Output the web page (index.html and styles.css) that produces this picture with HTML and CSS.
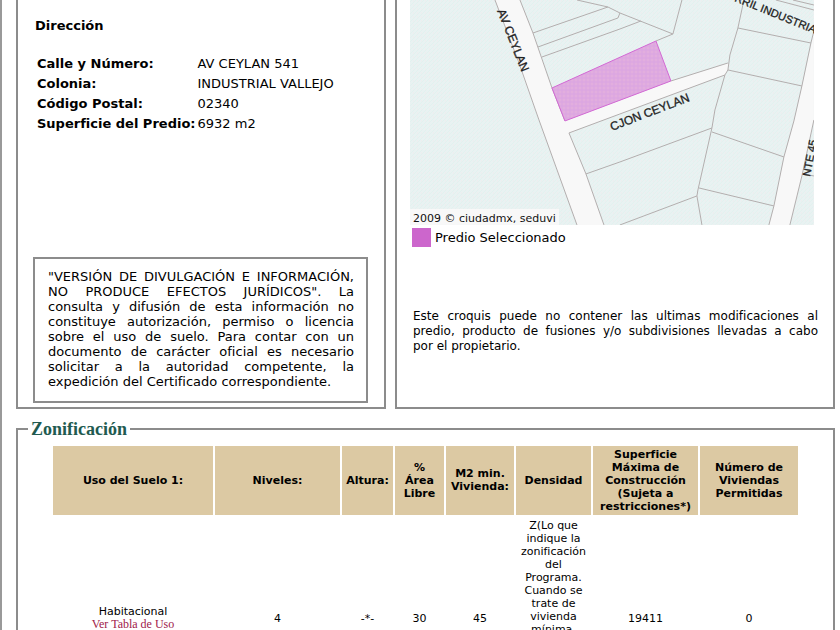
FILE: index.html
```html
<!DOCTYPE html>
<html lang="es">
<head>
<meta charset="utf-8">
<title>Zonificación</title>
<link rel="stylesheet" href="styles.css">
</head>
<body>
<main class="page">
  <div class="columns">
    <section class="panel address">
      <h2 class="heading">Dirección</h2>
      <table class="details">
        <tr><th scope="row">Calle y Número:</th><td>AV CEYLAN 541</td></tr>
        <tr><th scope="row">Colonia:</th><td>INDUSTRIAL VALLEJO</td></tr>
        <tr><th scope="row">Código Postal:</th><td>02340</td></tr>
        <tr><th scope="row">Superficie del Predio:</th><td>6932 m2</td></tr>
      </table>
      <p class="notice">"VERSIÓN DE DIVULGACIÓN E INFORMACIÓN, NO PRODUCE EFECTOS JURÍDICOS". La consulta y difusión de esta información no constituye autorización, permiso o licencia sobre el uso de suelo. Para contar con un documento de carácter oficial es necesario solicitar a la autoridad competente, la expedición del Certificado correspondiente.</p>
    </section>
    <section class="panel sketch">
      <svg class="map" viewBox="410 0 404 225">
        <defs>
          <pattern id="land" width="4" height="4" patternUnits="userSpaceOnUse">
            <rect width="4" height="4" fill="#e9f2f2"/>
            <path d="M0 4L4 0" stroke="#e2f1ef" stroke-width="1"/>
            <path d="M1 1h1" stroke="#f2eaec" stroke-width="1"/>
          </pattern>
          <pattern id="lot" width="4" height="4" patternUnits="userSpaceOnUse">
            <rect width="4" height="4" fill="#e2aede"/>
            <path d="M0 2h4M2 0v4" stroke="#daa5e2" stroke-width="1"/>
          </pattern>
        </defs>
        <rect x="410" width="404" height="225" fill="url(#land)"/>
        <g fill="#f8f8f8">
          <path d="M495 0H520L533 33L552 88L565 121L671 81L728 63L728 70L725 75L569 133L586 174L604 225H577L539 120Z"/>
          <path d="M814 33L802 86L794 121L784 157L774 206L769 225H790L802 176L814 120Z"/>
        </g>
        <g class="parcels">
          <path d="M495 0L519 63L539 120L577 225M520 0L533 33L552 88L565 121M604 225L586 174L569 133L620 114L725 75M671 81L728 63"/>
          <path d="M577 0L608 7L620 13L673 34L682 0M673 34L656 41M533 33L608 7M538 47L618 18L620 13M542 57L556 52L620 29L641 21"/>
          <path d="M744 0L738 28L730 55L728 70L725 75L715 110L712 128L698 190L697 196L702 225"/>
          <path d="M738 28L811 43M728 70L802 86M712 132L784 157M699 188L774 206M697 196L620 225M712 128L620 162L586 174"/>
          <path d="M814 31L811 43L802 86L794 121L784 157L774 206L769 225M814 120L802 176L790 225M803 174L814 176M776 0L814 10M793 0L814 5"/>
        </g>
        <path d="M552 88L656 41L671 81L565 121Z" fill="url(#lot)" stroke="#d268d4" stroke-width="1"/>
        <g class="streets">
          <text transform="translate(497 11) rotate(68)">AV CEYLAN</text>
          <text transform="translate(612 131) rotate(-21)">CJON CEYLAN</text>
          <text class="minor" transform="translate(734 1) rotate(22)">RRIL INDUSTRIA</text>
          <text class="minor" transform="translate(810 177) rotate(-79)">NTE 45</text>
        </g>
        <rect x="410" y="209" width="149" height="16" fill="#f8f8f8"/>
        <text class="credit" x="413" y="222">2009 © ciudadmx, seduvi</text>
      </svg>
      <div class="legend"><span class="swatch"></span>Predio Seleccionado</div>
      <p class="remark">Este croquis puede no contener las ultimas modificaciones al predio, producto de fusiones y/o subdivisiones llevadas a cabo por&nbsp;el&nbsp;propietario.</p>
    </section>
  </div>
  <fieldset class="panel zoning">
    <legend class="title">Zonificación</legend>
    <table class="uses">
      <colgroup><col><col class="c-levels"><col class="c-height"><col class="c-free"><col class="c-min"><col class="c-density"><col class="c-surface"><col class="c-homes"></colgroup>
      <thead>
        <tr><th>Uso del Suelo 1:</th><th>Niveles:</th><th>Altura:</th><th class="narrow">% Área Libre</th><th>M2 min. Vivienda:</th><th>Densidad</th><th>Superficie Máxima de Construcción (Sujeta a restricciones*)</th><th>Número de Viviendas Permitidas</th></tr>
      </thead>
      <tbody>
        <tr><td>Habitacional<br><a href="#">Ver Tabla de Uso</a></td><td>4</td><td>-*-</td><td>30</td><td>45</td><td class="density">Z(Lo que indique la zonificación del Programa. Cuando se trate de vivienda mínima,</td><td>19411</td><td>0</td></tr>
      </tbody>
    </table>
  </fieldset>
</main>
</body>
</html>
```
FILE: styles.css
```css
* { box-sizing: border-box; }
body {
  margin: 0;
  height: 100vh;
  overflow: hidden;
  background: #fff;
  color: #000;
  font: 13px/15px "DejaVu Sans", Verdana, sans-serif;
}
.page {
  height: 100vh;
  overflow: hidden;
  padding: 0 5px 0 14px;
  border-left: 2px solid #999;
}
.columns {
  display: grid;
  grid-template-columns: 370fr 440fr;
  gap: 9px;
}
.panel {
  margin: 0;
  border: 2px solid #8c8c8c;
  min-width: 0;
}
.columns .panel { border-top: 0; }
.address {
  display: flex;
  flex-direction: column;
  padding: 18px 16px 4px 15px;
}
.heading { margin: 0 0 20px 2px; font-size: 13px; line-height: 15px; }
.details { align-self: flex-start; border-spacing: 0; margin-left: 2px; }
.details th, .details td {
  padding: 0 2px;
  height: 20px;
  text-align: left;
  white-space: nowrap;
}
.details th { padding-right: 0; font-size: 13px; }
.notice {
  margin: auto 0 0;
  border: 2px solid #8c8c8c;
  padding: 10px 12px 12px 13px;
  text-align: justify;
}
.sketch { padding: 0 15px 53px 13px; }
.map { display: block; width: 99%; }
.parcels { fill: none; stroke: #b3aeae; stroke-width: 1; }
.streets { font: 12px "Liberation Sans", Arial, sans-serif; fill: #222; stroke: #222; stroke-width: 0.3; }
.streets .minor { font-size: 11px; }
.credit { font: 11px "DejaVu Sans", Verdana, sans-serif; fill: #111; }
.legend {
  display: flex;
  align-items: center;
  gap: 4px;
  padding: 3px 2px 0;
}
.swatch { width: 19px; height: 19px; background: #cc66cc; }
.remark { margin: 62px 0 0 3px; font-size: 12px; text-align: justify; }
.zoning { margin-top: 9px; padding: 4px 33px 0; }
.title {
  margin-left: -23px;
  padding: 0 3px;
  color: #215a50;
  font: bold 18px/22px "Liberation Serif", "Times New Roman", serif;
}
.uses {
  width: 100%;
  table-layout: fixed;
  border-spacing: 2px;
  text-align: center;
  font-size: 11px;
  line-height: 13px;
}
.uses th { padding: 2px; background: #dcc9a3; }
.uses .narrow { padding: 2px 6px; }
.uses td { padding: 2px 4px; height: 203px; }
.uses .density { vertical-align: top; }
.uses a {
  color: #a0204a;
  font: 12px/13px "Liberation Serif", "Times New Roman", serif;
  text-decoration: none;
}
.c-levels { width: 125px; }
.c-height { width: 51px; }
.c-free { width: 49px; }
.c-min { width: 68px; }
.c-density { width: 75px; }
.c-surface { width: 105px; }
.c-homes { width: 98px; }
```
